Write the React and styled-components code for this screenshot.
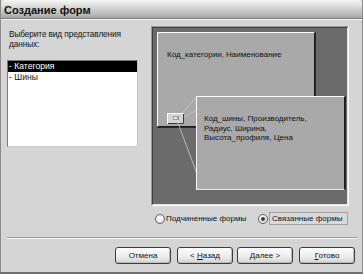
import React from 'react';
import styled, { createGlobalStyle } from 'styled-components';

const GlobalStyle = createGlobalStyle`
  html, body {
    margin: 0;
    padding: 0;
    background: #d5d5d5;
  }
  * {
    box-sizing: border-box;
  }
`;

const Window = styled.div`
  width: 363px;
  height: 274px;
  display: flex;
  flex-direction: column;
  background: #d5d5d5;
  border: 1px solid #8a8a8a;
  border-top: none;
  border-bottom: 2px solid #6e6e6e;
  font-family: 'Liberation Sans', Arial, sans-serif;
  color: #111;
  overflow: hidden;
`;

const TitleBar = styled.div`
  height: 19px;
  flex-shrink: 0;
  display: flex;
  align-items: center;
  padding-left: 3px;
  background: linear-gradient(#f6f6f6, #dcdcdc 35%, #b9b9b9 80%, #a4a4a4);
  border-bottom: 1px solid #7c7c7c;
  border-top-left-radius: 4px;
  border-top-right-radius: 4px;
`;

const Title = styled.span`
  font-size: 11px;
  font-weight: bold;
  color: #111;
  padding-top: 1px;
`;

const Body = styled.div`
  flex: 1;
  display: flex;
  flex-direction: column;
  border-top: 1px solid #f4f4f4;
  padding: 0 5px 0 6px;
`;

const Main = styled.div`
  display: flex;
  align-items: flex-start;
`;

const LeftCol = styled.div`
  width: 131px;
  display: flex;
  flex-direction: column;
`;

const Prompt = styled.div`
  margin: 9px 0 0 2px;
  font-size: 8.3px;
  letter-spacing: -0.12px;
  line-height: 10px;
`;

const ListBox = styled.div`
  margin-top: 11px;
  height: 87px;
  background: #fff;
  border: 1px solid;
  border-color: #7a7a7a #c8c8c8 #c8c8c8 #7a7a7a;
  padding: 0;
`;

const ListItem = styled.div`
  height: 11px;
  line-height: 11px;
  padding-left: 1px;
  font-size: 8.6px;
  background: ${(p) => (p.$selected ? '#000' : 'transparent')};
  color: ${(p) => (p.$selected ? '#fff' : '#111')};
`;

const RightCol = styled.div`
  margin-left: 13px;
  display: flex;
  flex-direction: column;
`;

const Preview = styled.div`
  margin-top: 6px;
  width: 198px;
  height: 180px;
  border: 1px solid;
  border-color: #9a9a9a #fbfbfb #fbfbfb #9a9a9a;
`;

const Canvas = styled.div`
  position: relative;
  width: 100%;
  height: 100%;
  background: #6b6b6b;
  border: 1px solid;
  border-color: #3e3e3e #e4e4e4 #e4e4e4 #3e3e3e;
  overflow: hidden;
`;

const FormBox = styled.div`
  position: absolute;
  left: ${(p) => p.$x}px;
  top: ${(p) => p.$y}px;
  width: ${(p) => p.$w}px;
  height: ${(p) => p.$h}px;
  background: #a9a9a9;
  border: 1px solid;
  border-color: #fafafa #1c1c1c ${(p) => (p.$lightBottom ? '#e6e6e6' : '#1c1c1c')} #fafafa;
  box-shadow: ${(p) => (p.$lightBottom ? '1px 0 0 #2a2a2a' : '0 1px 0 #2a2a2a, 1px 0 0 #2a2a2a')};
  padding: ${(p) => p.$pad};
  font-size: 8px;
  line-height: 9.6px;
  color: #111;
`;

const SubformIcon = styled.svg`
  position: absolute;
  left: 14px;
  top: 85px;
`;

const Links = styled.svg`
  position: absolute;
  left: 0;
  top: 0;
  pointer-events: none;
`;

const RadioRow = styled.div`
  margin-top: 6px;
  height: 13px;
  display: flex;
  align-items: center;
  padding-left: 4px;
`;

const RadioOption = styled.label`
  width: ${(p) => p.$w}px;
  display: flex;
  align-items: center;
  gap: 1px;
  font-size: 8px;
`;

const RadioCircle = styled.span`
  width: 10px;
  height: 10px;
  flex-shrink: 0;
  border-radius: 50%;
  border: 1px solid #5e5e5e;
  background: radial-gradient(circle at 40% 35%, #ffffff, #d9d9d9);
  display: flex;
  align-items: center;
  justify-content: center;
  &::after {
    content: '';
    width: 4px;
    height: 4px;
    border-radius: 50%;
    background: ${(p) => (p.$checked ? '#3a3a3a' : 'transparent')};
  }
`;

const RadioText = styled.span`
  padding: ${(p) => (p.$focused ? '1px 2px' : '0')};
  border: ${(p) => (p.$focused ? '1px solid #a2a2a2' : 'none')};
  background: ${(p) => (p.$focused ? '#d9d9d9' : 'transparent')};
  white-space: nowrap;
  flex: ${(p) => (p.$focused ? 1 : 'none')};
`;

const Separator = styled.div`
  margin-top: 12px;
  height: 2px;
  border-top: 1px solid #9c9c9c;
  border-bottom: 1px solid #f6f6f6;
`;

const ButtonRow = styled.div`
  margin-top: 8px;
  display: flex;
  justify-content: flex-end;
  padding-right: 2px;
`;

const Button = styled.button`
  width: 56px;
  height: 17px;
  margin-left: ${(p) => p.$gap}px;
  padding: 0;
  border: 1px solid #3c3c3c;
  border-radius: 3px;
  background: linear-gradient(#fdfdfd, #ececec 60%, #d2d2d2);
  box-shadow: inset -1px -1px 0 #bdbdbd;
  font-family: 'Liberation Sans', Arial, sans-serif;
  font-size: 8px;
  color: #111;
  u {
    text-decoration: underline;
  }
`;

export default function App() {
  return (
    <>
      <GlobalStyle />
      <Window>
        <TitleBar>
          <Title>Создание форм</Title>
        </TitleBar>
        <Body>
          <Main>
            <LeftCol>
              <Prompt>
                Выберите вид представления
                <br />
                данных:
              </Prompt>
              <ListBox>
                <ListItem $selected>- Категория</ListItem>
                <ListItem>- Шины</ListItem>
              </ListBox>
            </LeftCol>
            <RightCol>
              <Preview>
                <Canvas>
                  <FormBox $x={4} $y={4} $w={158} $h={95} $pad="17px 0 0 9px">
                    Код_категории, Наименование
                  </FormBox>
                  <SubformIcon width="17" height="11" viewBox="0 0 17 11">
                    <rect x="0.5" y="0.5" width="16" height="10" fill="#d4d4d4" stroke="#f8f8f8" />
                    <line x1="1" y1="10.5" x2="16.5" y2="10.5" stroke="#3a3a3a" />
                    <line x1="16.5" y1="1" x2="16.5" y2="10.5" stroke="#3a3a3a" />
                    <rect x="6" y="3" width="6" height="4" fill="#9a9a9a" />
                    <rect x="7" y="4" width="3" height="2" fill="#efefef" />
                  </SubformIcon>
                  <Links width="194" height="176">
                    <g stroke="#c9c9c9" strokeWidth="0.8" fill="none">
                      <line x1="29" y1="85" x2="44" y2="69" />
                      <line x1="31" y1="89" x2="44" y2="82" />
                      <line x1="25" y1="95" x2="44" y2="146" />
                    </g>
                  </Links>
                  <FormBox $x={43} $y={68} $w={149} $h={94} $pad="17px 0 0 7px" $lightBottom>
                    Код_шины, Производитель,
                    <br />
                    Радиус, Ширина,
                    <br />
                    Высота_профиля, Цена
                  </FormBox>
                </Canvas>
              </Preview>
              <RadioRow>
                <RadioOption $w={103}>
                  <RadioCircle />
                  <RadioText>Подчиненные формы</RadioText>
                </RadioOption>
                <RadioOption $w={90}>
                  <RadioCircle $checked />
                  <RadioText $focused>Связанные формы</RadioText>
                </RadioOption>
              </RadioRow>
            </RightCol>
          </Main>
          <Separator />
          <ButtonRow>
            <Button $gap={0}>Отмена</Button>
            <Button $gap={6}>
              &lt; <u>Н</u>азад
            </Button>
            <Button $gap={4}>
              <u>Д</u>алее &gt;
            </Button>
            <Button $gap={6}>
              <u>Г</u>отово
            </Button>
          </ButtonRow>
        </Body>
      </Window>
    </>
  );
}
